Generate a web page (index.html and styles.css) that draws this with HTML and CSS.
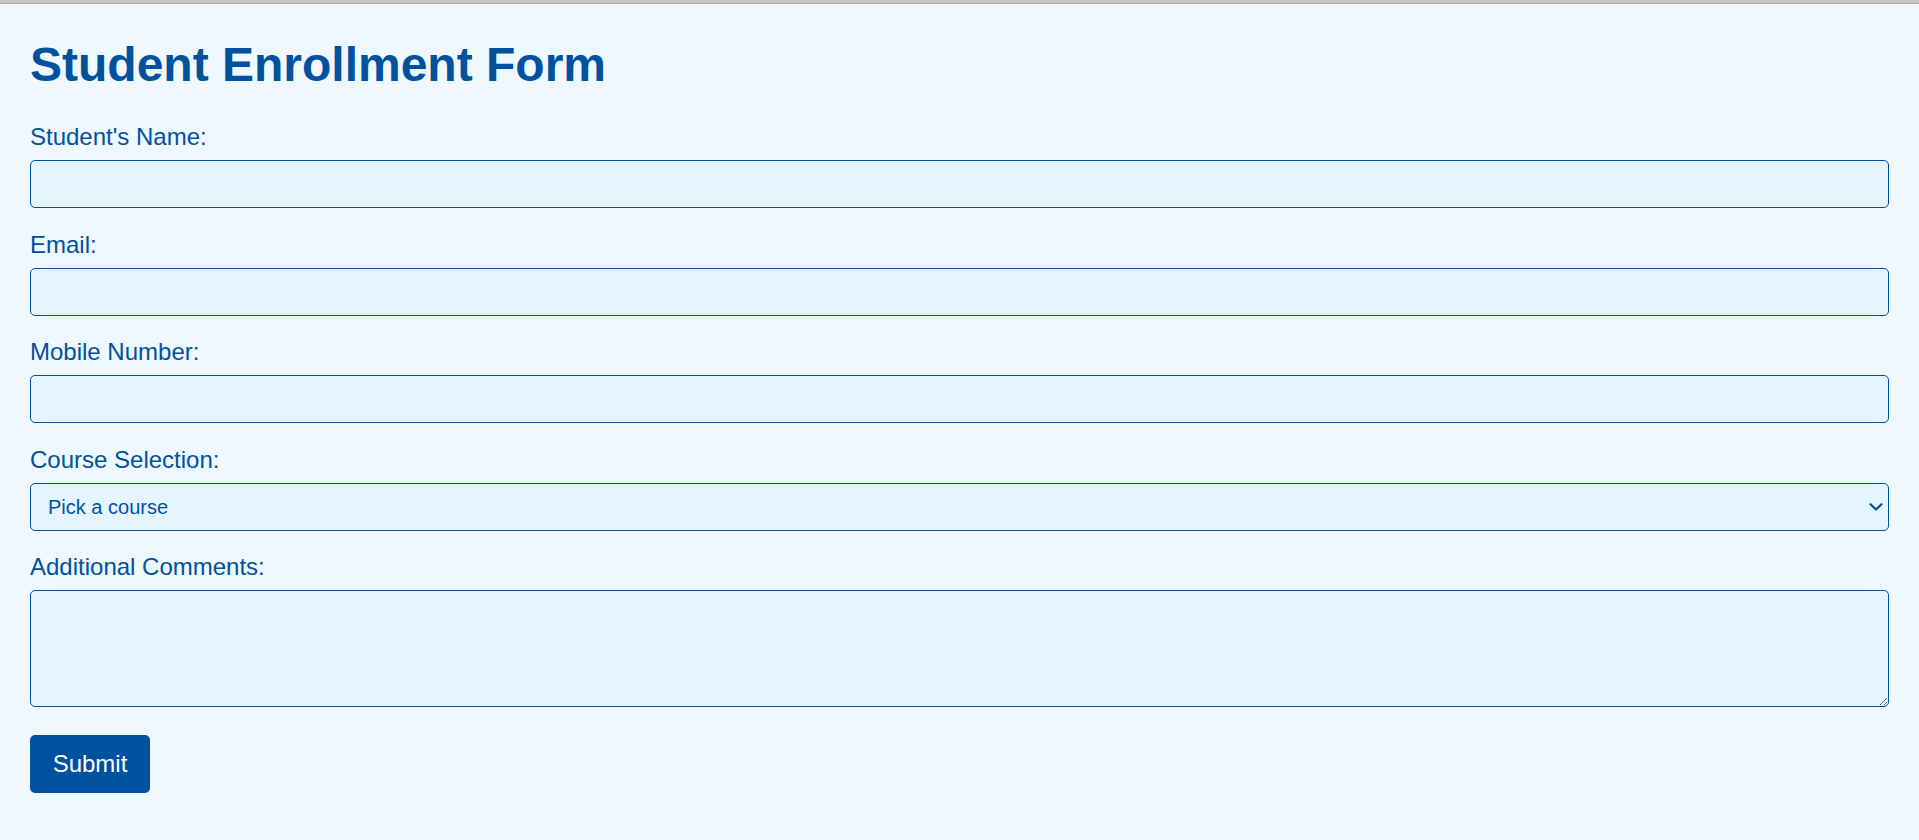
FILE: index.html
```html
<!DOCTYPE html>
<html lang="en">
<head>
    <meta charset="UTF-8">
    <meta name="viewport" content="width=device-width, initial-scale=1.0">
    <title>Student Enrollment Form</title>
    <link rel="stylesheet" href="styles.css">
</head>
<body>
    <div class="top-bar"></div>
    <main class="page">
        <h1>Student Enrollment Form</h1>
        <form class="enroll-form">
            <label for="name">Student's Name:</label>
            <input type="text" id="name" name="name">

            <label for="email">Email:</label>
            <input type="email" id="email" name="email">

            <label for="mobile">Mobile Number:</label>
            <input type="tel" id="mobile" name="mobile">

            <label for="course">Course Selection:</label>
            <div class="select-wrap">
                <select id="course" name="course">
                    <option value="">Pick a course</option>
                    <option value="web">Web Development</option>
                    <option value="data">Data Science</option>
                    <option value="design">UI/UX Design</option>
                </select>
                <!-- dropdown chevron -->
                <svg class="chevron" width="14" height="8" viewBox="0 0 14 8">
                    <path d="M1.5 1.2 L7 6.5 L12.5 1.2" fill="none" stroke="#00519e" stroke-width="2.2" stroke-linecap="round" stroke-linejoin="round"/>
                </svg>
            </div>

            <label for="comments">Additional Comments:</label>
            <textarea id="comments" name="comments"></textarea>

            <button type="submit">Submit</button>
        </form>
    </main>
</body>
</html>
```

FILE: styles.css
```css
html, body {
    margin: 0;
    padding: 0;
}
body {
    font-family: "Liberation Sans", Arial, sans-serif;
    background-color: #eff7ff;
    color: #00519e;
    min-height: 840px;
}
.top-bar {
    height: 3px;
    background-color: #c8c8c5;
    border-bottom: 1px solid #a9a9a6;
}
.page {
    padding: 0 30px 30px 30px;
}
h1 {
    font-size: 48px;
    font-weight: bold;
    line-height: 55px;
    color: #00519e;
    margin: 33px 0 31px 0;
}
.enroll-form {
    display: flex;
    flex-direction: column;
    align-items: stretch;
}
.enroll-form label {
    display: block;
    font-size: 24px;
    line-height: 28px;
    margin-bottom: 9px;
}
.enroll-form input,
.enroll-form select,
.enroll-form textarea {
    display: block;
    box-sizing: border-box;
    width: 100%;
    height: 48px;
    margin: 0 0 22.5px 0;
    padding: 0 17px;
    font-family: "Liberation Sans", Arial, sans-serif;
    font-size: 20px;
    color: #00519e;
    background-color: #e5f5ff;
    border: 1px solid #00519e;
    border-radius: 5px;
    outline: none;
}
.select-wrap {
    position: relative;
}
.enroll-form select {
    -webkit-appearance: none;
    appearance: none;
    cursor: pointer;
}
.chevron {
    position: absolute;
    right: 6px;
    top: 20px;
    pointer-events: none;
}
.enroll-form textarea {
    height: 117px;
    padding: 10px 17px;
    margin-bottom: 28px;
    resize: vertical;
}
.enroll-form button {
    align-self: flex-start;
    width: 120px;
    height: 58px;
    padding: 0;
    font-family: "Liberation Sans", Arial, sans-serif;
    font-size: 24px;
    color: white;
    background-color: #00519e;
    border: none;
    border-radius: 5px;
    cursor: pointer;
}
.enroll-form button:hover {
    background-color: #003f7d;
}
```
